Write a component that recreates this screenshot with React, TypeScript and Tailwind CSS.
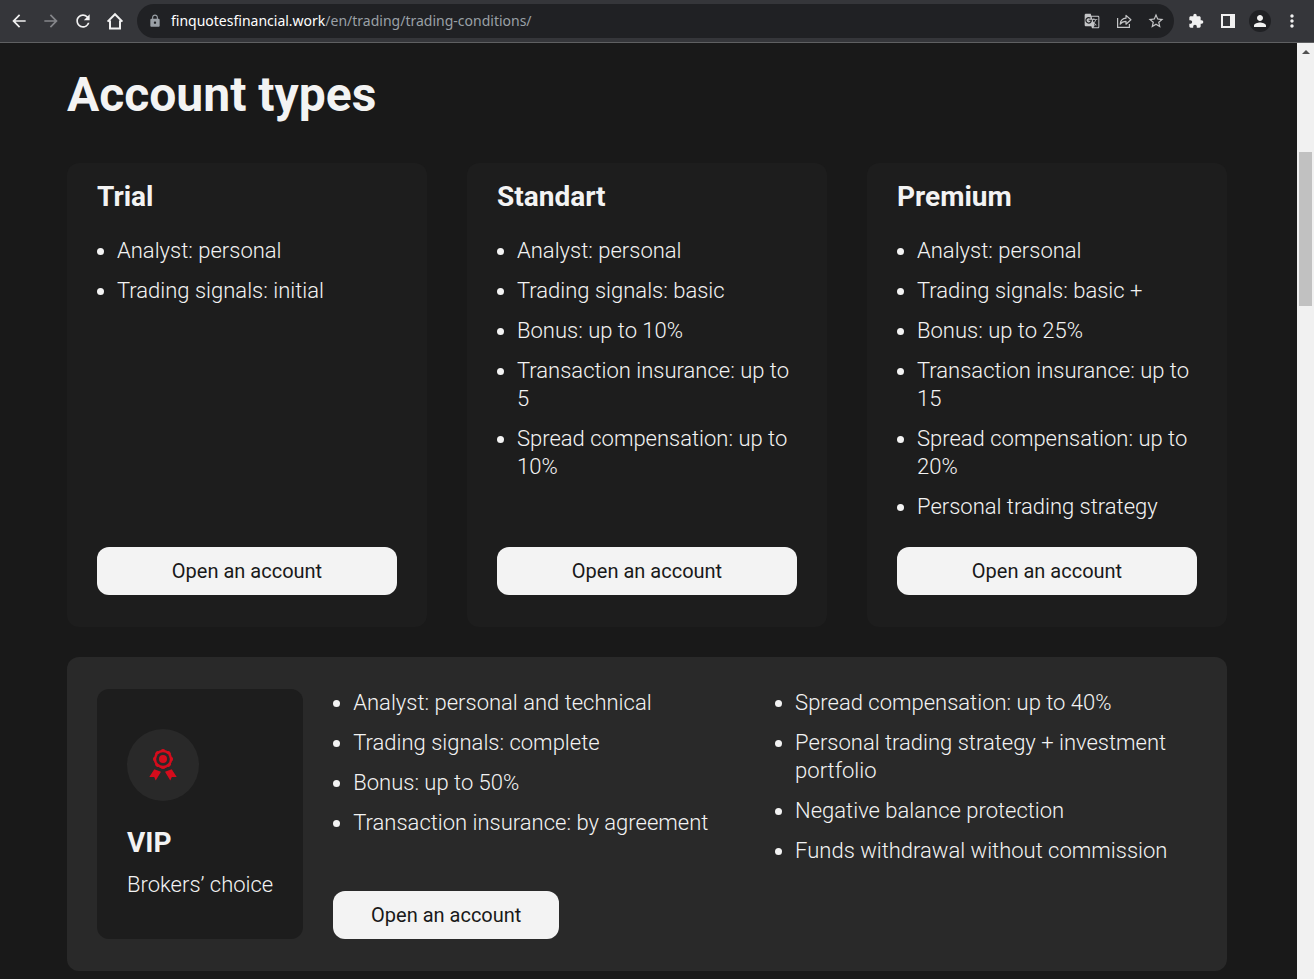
import {
  MdArrowBack,
  MdArrowForward,
  MdExtension,
  MdGTranslate,
  MdLock,
  MdMoreVert,
  MdPerson,
  MdRefresh,
  MdStarBorder,
} from 'react-icons/md'

const accounts = [
  {
    name: 'Trial',
    features: ['Analyst: personal', 'Trading signals: initial'],
  },
  {
    name: 'Standart',
    features: [
      'Analyst: personal',
      'Trading signals: basic',
      'Bonus: up to 10%',
      'Transaction insurance: up to 5',
      'Spread compensation: up to 10%',
    ],
  },
  {
    name: 'Premium',
    features: [
      'Analyst: personal',
      'Trading signals: basic +',
      'Bonus: up to 25%',
      'Transaction insurance: up to 15',
      'Spread compensation: up to 20%',
      'Personal trading strategy',
    ],
  },
]

const vipFeatures = [
  [
    'Analyst: personal and technical',
    'Trading signals: complete',
    'Bonus: up to 50%',
    'Transaction insurance: by agreement',
  ],
  [
    'Spread compensation: up to 40%',
    'Personal trading strategy + investment portfolio',
    'Negative balance protection',
    'Funds withdrawal without commission',
  ],
]

function HomeIcon() {
  return (
    <svg viewBox="0 0 20 20" className="w-5 h-5" fill="none" stroke="currentColor" strokeWidth="2">
      <path d="M2.6 10.6 10 3.2l7.4 7.4M5 9.5v8h10v-8" />
    </svg>
  )
}

function ShareIcon() {
  return (
    <svg viewBox="0 0 16 16" className="w-4 h-4" fill="none" stroke="currentColor" strokeWidth="1.2">
      <path d="M1.6 5v9.4h11.8V11" />
      <path d="M4.2 11.2c.3-3.6 2.2-5.7 5.8-6V2.4l4.9 4.4-4.9 4.4V8.400c-2.600 0-4.500.9-5.800 2.800Z" strokeLinejoin="round" />
    </svg>
  )
}

function SidePanelIcon() {
  return (
    <svg viewBox="0 0 14 14" className="w-3.5 h-3.5" fill="currentColor">
      <path fillRule="evenodd" d="M0 0h14v14H0ZM2 2v10h7V2Z" />
    </svg>
  )
}

function MedalIcon() {
  const lobes = [0, 45, 90, 135, 180, 225, 270, 315]
  return (
    <svg viewBox="0 0 32 32" className="w-8 h-8 text-[#d50c1c]" fill="currentColor">
      <circle cx="16" cy="10" r="9.2" />
      {lobes.map((angle) => (
        <circle key={angle} cx="16" cy="2.5" r="2.5" transform={`rotate(${angle} 16 10)`} />
      ))}
      <circle cx="16" cy="10" r="6.8" fill="#292929" />
      <circle cx="16" cy="10" r="4" />
      <path d="M7.3 20.3 14 22.8 8.7 31.6 7.2 28H2.3Z" />
      <path d="M24.7 20.3 18 22.8 23.3 31.6 24.8 28h4.9Z" />
    </svg>
  )
}

function FeatureList({ items }: { items: string[] }) {
  return (
    <ul className="list-disc pl-5 space-y-3 text-[22px] leading-7 font-light">
      {items.map((item) => (
        <li key={item}>{item}</li>
      ))}
    </ul>
  )
}

function BrowserBar() {
  return (
    <header className="flex items-center shrink-0 h-[43px] pl-[3px] pr-1.5 bg-[#35363a] border-b border-[#5f6062] text-[#f1f1f1]">
      <nav className="flex">
        <button aria-label="Back" className="w-8 h-8 flex items-center justify-center">
          <MdArrowBack className="w-5 h-5" />
        </button>
        <button aria-label="Forward" className="w-8 h-8 flex items-center justify-center text-[#85868a]">
          <MdArrowForward className="w-5 h-5" />
        </button>
        <button aria-label="Reload" className="w-8 h-8 flex items-center justify-center">
          <MdRefresh className="w-5 h-5" />
        </button>
        <button aria-label="Home" className="w-8 h-8 flex items-center justify-center">
          <HomeIcon />
        </button>
      </nav>

      <div className="flex-1 flex items-center h-[34px] ml-1.5 pl-[11px] pr-0.5 rounded-full bg-[#202124]">
        <MdLock className="w-3.5 h-3.5 text-[#9aa0a6]" />
        <div
          role="textbox"
          aria-label="Address"
          className="flex-1 ml-[9px] whitespace-nowrap font-['Noto_Sans',sans-serif] text-sm text-[#9aa0a6]"
        >
          <span className="text-white">finquotesfinancial.work</span>/en/trading/trading-conditions/
        </div>
        <div className="flex text-[#c4c5c7]">
          <button aria-label="Translate" className="w-8 h-8 flex items-center justify-center">
            <MdGTranslate className="w-4 h-4" />
          </button>
          <button aria-label="Share" className="w-8 h-8 flex items-center justify-center">
            <ShareIcon />
          </button>
          <button aria-label="Bookmark" className="w-8 h-8 flex items-center justify-center">
            <MdStarBorder className="w-[18px] h-[18px]" />
          </button>
        </div>
      </div>

      <div className="flex ml-1.5">
        <button aria-label="Extensions" className="w-8 h-8 flex items-center justify-center">
          <MdExtension className="w-4 h-4" />
        </button>
        <button aria-label="Side panel" className="w-8 h-8 flex items-center justify-center">
          <SidePanelIcon />
        </button>
        <button aria-label="Profile" className="w-8 h-8 flex items-center justify-center">
          <span className="w-[22px] h-[22px] flex items-center justify-center rounded-full bg-[#202124]">
            <MdPerson className="w-[18px] h-[18px]" />
          </span>
        </button>
        <button aria-label="Menu" className="w-8 h-8 flex items-center justify-center">
          <MdMoreVert className="w-5 h-5" />
        </button>
      </div>
    </header>
  )
}

function Scrollbar() {
  return (
    <div className="w-[17px] shrink-0 bg-[#f1f1f1] px-0.5">
      <div className="h-[109px] pt-[7px] flex justify-center">
        <svg viewBox="0 0 8 4" className="w-2 h-1" fill="#505050">
          <path d="M4 0 8 4H0Z" />
        </svg>
      </div>
      <div className="h-[154px] bg-[#c1c1c1]" />
    </div>
  )
}

function App() {
  return (
    <div className="h-screen flex flex-col overflow-hidden bg-[#191919] font-[Roboto,sans-serif] text-[#f3f3f3]">
      <BrowserBar />

      <div className="flex-1 min-h-0 flex">
        <main className="flex-1 overflow-hidden pl-[67px] pr-[70px] pt-6">
          <h1 className="text-5xl leading-14 font-bold">Account types</h1>

          <div className="grid grid-cols-3 gap-10 mt-10">
            {accounts.map((account) => (
              <section key={account.name} className="flex flex-col rounded-xl bg-[#1d1d1d] px-[30px] pt-[18px] pb-8">
                <h2 className="mb-6 text-[28px] leading-8 font-bold">{account.name}</h2>
                <FeatureList items={account.features} />
                <div className="mt-auto pt-[26px]">
                  <button className="w-full h-12 rounded-xl bg-[#f3f3f3] text-xl text-[#191919]">Open an account</button>
                </div>
              </section>
            ))}
          </div>

          <section className="flex gap-[30px] mt-[30px] rounded-xl bg-[#292929] px-[30px] py-8">
            <div className="shrink-0 rounded-xl bg-[#1d1d1d] px-[30px] py-10">
              <div className="w-18 h-18 flex items-center justify-center rounded-full bg-[#292929]">
                <MedalIcon />
              </div>
              <h2 className="mt-[26px] text-[28px] leading-8 font-bold">VIP</h2>
              <p className="mt-3 text-[22px] leading-7 font-light">Brokers’ choice</p>
            </div>

            <div className="flex-1">
              <div className="grid grid-cols-2 gap-5">
                {vipFeatures.map((items) => (
                  <FeatureList key={items[0]} items={items} />
                ))}
              </div>
              <button className="w-[226px] h-12 mt-[26px] rounded-xl bg-[#f3f3f3] text-xl text-[#191919]">
                Open an account
              </button>
            </div>
          </section>
        </main>

        <Scrollbar />
      </div>
    </div>
  )
}

export default App
